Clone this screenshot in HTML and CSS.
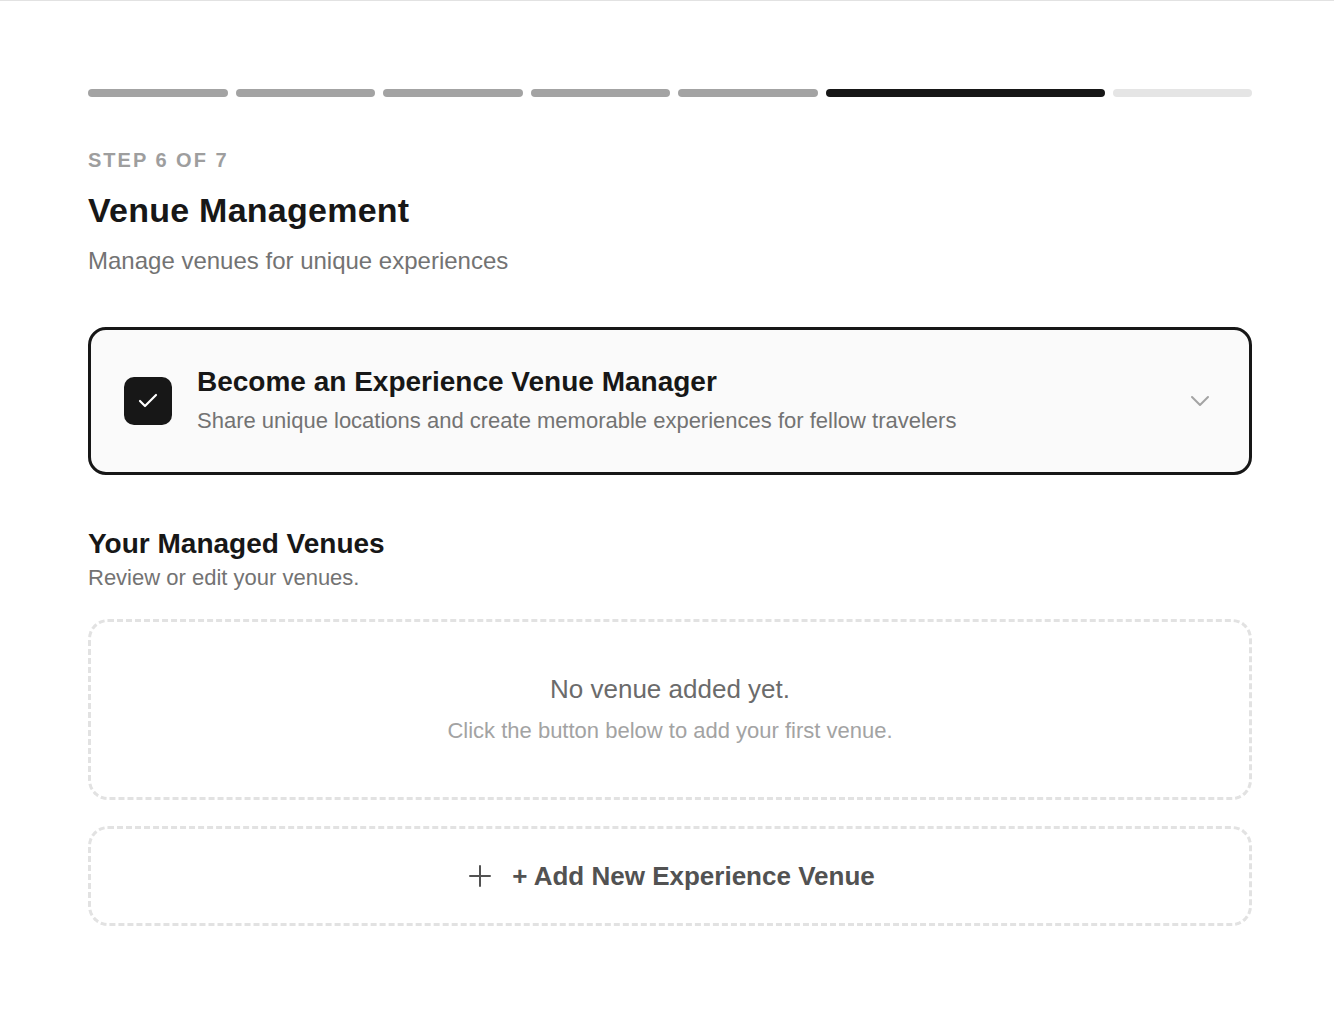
FILE: index.html
```html
<!DOCTYPE html>
<html lang="en">

<head>
    <meta charset="UTF-8">
    <meta name="viewport" content="width=device-width, initial-scale=1.0">
    <title>Venue Management</title>
    <link rel="stylesheet" href="styles.css">
</head>

<body>
    <div class="page">
        <div class="steps">
            <div class="step done"></div>
            <div class="step done"></div>
            <div class="step done"></div>
            <div class="step done"></div>
            <div class="step done"></div>
            <div class="step current"></div>
            <div class="step"></div>
        </div>

        <p class="step-label">Step 6 of 7</p>
        <h1 class="page-title">Venue Management</h1>
        <p class="page-subtitle">Manage venues for unique experiences</p>

        <div class="role-card">
            <div class="role-check">
                <svg width="24" height="24" viewBox="0 0 24 24" fill="none" stroke="currentColor" stroke-width="2.2"
                    stroke-linecap="round" stroke-linejoin="round">
                    <path d="M20 6 9 17l-5-5" />
                </svg>
            </div>
            <div class="role-text">
                <p class="role-title">Become an Experience Venue Manager</p>
                <p class="role-description">Share unique locations and create memorable experiences for fellow travelers</p>
            </div>
            <svg class="role-chevron" width="20" height="12" viewBox="0 0 20 12" fill="none" stroke="currentColor"
                stroke-width="2" stroke-linecap="round" stroke-linejoin="round">
                <path d="M2 2l8 8 8-8" />
            </svg>
        </div>

        <h2 class="section-title">Your Managed Venues</h2>
        <p class="section-subtitle">Review or edit your venues.</p>

        <div class="empty-box">
            <p class="empty-title">No venue added yet.</p>
            <p class="empty-hint">Click the button below to add your first venue.</p>
        </div>

        <div class="add-button">
            <svg width="22" height="22" viewBox="0 0 22 22" fill="none" stroke="currentColor" stroke-width="2"
                stroke-linecap="round">
                <path d="M11 1v20M1 11h20" />
            </svg>
            <span>+ Add New Experience Venue</span>
        </div>
    </div>
</body>

</html>
```

FILE: styles.css
```css
* {
    font-family: "Liberation Sans", Arial, sans-serif;
}

*,
*::before,
*::after {
    box-sizing: border-box;
}

body {
    margin: 0;
    background-color: white;
    border-top: 1px solid rgb(226, 226, 226);
}

p,
h1,
h2 {
    margin: 0;
}

.page {
    width: 1164px;
    margin-left: 88px;
    padding-top: 88px;
    padding-bottom: 60px;
}

.steps {
    display: flex;
    gap: 8px;
}

.step {
    flex: 1;
    height: 8px;
    border-radius: 4px;
    background-color: rgb(229, 229, 229);
}

.step.done {
    background-color: rgb(163, 163, 163);
}

.step.current {
    flex: 2;
    background-color: rgb(23, 23, 23);
}

.step-label {
    margin-top: 48px;
    font-size: 20px;
    line-height: 30px;
    font-weight: 700;
    letter-spacing: 0.1em;
    text-transform: uppercase;
    color: rgb(158, 158, 158);
}

.page-title {
    margin-top: 15px;
    font-size: 34px;
    line-height: 41px;
    font-weight: 700;
    letter-spacing: 0.25px;
    color: rgb(23, 23, 23);
}

.page-subtitle {
    margin-top: 12px;
    font-size: 24px;
    line-height: 36px;
    color: rgb(115, 115, 115);
}

.role-card {
    display: flex;
    align-items: center;
    gap: 25px;
    margin-top: 48px;
    padding: 34px 39px 35px 33px;
    border: 3px solid rgb(23, 23, 23);
    border-radius: 18px;
    background-color: rgb(250, 250, 250);
}

.role-check {
    flex-shrink: 0;
    display: flex;
    align-items: center;
    justify-content: center;
    width: 48px;
    height: 48px;
    border-radius: 10px;
    background-color: rgb(23, 23, 23);
    color: white;
}

.role-text {
    flex: 1;
}

.role-title {
    font-size: 28px;
    line-height: 36px;
    font-weight: 700;
    color: rgb(23, 23, 23);
}

.role-description {
    margin-top: 5px;
    font-size: 22px;
    line-height: 32px;
    color: rgb(115, 115, 115);
}

.role-chevron {
    flex-shrink: 0;
    color: rgb(163, 163, 163);
}

.section-title {
    margin-top: 51px;
    font-size: 28px;
    line-height: 36px;
    font-weight: 700;
    color: rgb(23, 23, 23);
}

.section-subtitle {
    font-size: 22px;
    line-height: 32px;
    color: rgb(115, 115, 115);
}

.empty-box {
    display: flex;
    flex-direction: column;
    align-items: center;
    gap: 8px;
    margin-top: 25px;
    padding: 49px 24px 50px;
    border: 3px dashed rgb(226, 226, 226);
    border-radius: 20px;
    text-align: center;
}

.empty-title {
    font-size: 26px;
    line-height: 36px;
    color: rgb(107, 107, 107);
}

.empty-hint {
    font-size: 22px;
    line-height: 32px;
    color: rgb(163, 163, 163);
}

.add-button {
    display: flex;
    align-items: center;
    justify-content: center;
    gap: 21px;
    height: 100px;
    margin-top: 26px;
    padding-left: 4px;
    border: 3px dashed rgb(226, 226, 226);
    border-radius: 20px;
    font-size: 26px;
    font-weight: 700;
    color: rgb(82, 82, 82);
    cursor: pointer;
}

.add-button span {
    line-height: 36px;
}
```
